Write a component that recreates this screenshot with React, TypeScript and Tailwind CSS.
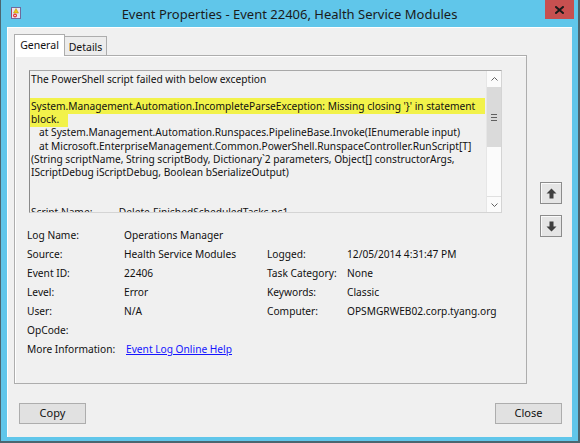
import React from "react";

type Row = [string, string, string?, string?];

const rows: Row[] = [
  ["Log Name:", "Operations Manager"],
  ["Source:", "Health Service Modules", "Logged:", "12/05/2014 4:31:47 PM"],
  ["Event ID:", "22406", "Task Category:", "None"],
  ["Level:", "Error", "Keywords:", "Classic"],
  ["User:", "N/A", "Computer:", "OPSMGRWEB02.corp.tyang.org"],
  ["OpCode:", ""],
];

function AppIcon() {
  return (
    <svg width="12" height="12" viewBox="0 0 12 12">
      <rect x="1.5" y="0.5" width="9" height="11" fill="#e9e4f2" stroke="#6f6a9c" />
      <line x1="1.5" y1="2" x2="1.5" y2="10" stroke="#b04060" strokeWidth="1" />
      <path d="M6 1.5 L8.5 6 L3.5 6 Z" fill="#f2c814" stroke="#b08a00" strokeWidth="0.5" />
      <circle cx="5" cy="8.5" r="2" fill="#e03030" />
      <circle cx="5" cy="8.5" r="0.8" fill="#fff" />
    </svg>
  );
}

function CloseX() {
  return (
    <svg width="9" height="8" viewBox="0 0 9 8">
      <path d="M1 1 L8 7 M8 1 L1 7" stroke="#1a1a1a" strokeWidth="2" strokeLinecap="square" />
    </svg>
  );
}

function BlockArrow({ down }: { down?: boolean }) {
  return (
    <svg width="11" height="11" viewBox="0 0 11 11" className={down ? "rotate-180" : ""}>
      <path d="M5.5 0.5 L10.5 5.5 L7.5 5.5 L7.5 10.5 L3.5 10.5 L3.5 5.5 L0.5 5.5 Z" fill="#3f3f3f" />
    </svg>
  );
}

function Chevron({ down }: { down?: boolean }) {
  return (
    <svg width="7" height="4" viewBox="0 0 7 4" className={down ? "rotate-180" : ""}>
      <path d="M0.5 3.5 L3.5 0.5 L6.5 3.5" fill="none" stroke="#606060" strokeWidth="1" />
    </svg>
  );
}

function TitleBar() {
  return (
    <div className="grid grid-cols-[1fr_auto_1fr] h-[27px] shrink-0">
      <div className="pl-[9px] pt-[7px]">
        <AppIcon />
      </div>
      <div className="pt-[5px] text-[13px] leading-[18px] text-[#1b1b1b]">
        Event Properties - Event 22406, Health Service Modules
      </div>
      <div className="flex justify-end pr-[4px]">
        <div className="w-[29px] h-[19px] bg-[#c75050] flex items-center justify-center">
          <CloseX />
        </div>
      </div>
    </div>
  );
}

function ScrollBar() {
  return (
    <div className="w-[15px] flex flex-col bg-[#fbfbfb] border-l border-[#e6e6e6]">
      <div className="h-[16px] flex items-center justify-center">
        <Chevron />
      </div>
      <div className="h-[60px] bg-[#dadada] flex flex-col items-center justify-center gap-[2px]">
        <div className="w-[6px] h-[1px] bg-[#606060]" />
        <div className="w-[6px] h-[1px] bg-[#606060]" />
        <div className="w-[6px] h-[1px] bg-[#606060]" />
      </div>
      <div className="flex-1" />
      <div className="h-[16px] flex items-center justify-center border-t border-[#e0e0e0]">
        <Chevron down />
      </div>
    </div>
  );
}

function Description() {
  return (
    <div className="h-[143px] w-[473px] ml-[14px] mt-[14px] flex border border-[#d4d4d4] border-l-[#8a8a8a] border-t-[#a8a8a8] bg-[#f0f0f0]">
      <div className="flex-1 overflow-hidden pl-[1px] pt-[2px] text-[10.2px] leading-[13.35px] whitespace-nowrap">
        <div>The PowerShell script failed with below exception</div>
        <div>&nbsp;</div>
        <div>
          <span className="bg-[#f2f24a] -ml-[4px] pl-[4px] pr-[10px] py-[1px]">
            {"System.Management.Automation.IncompleteParseException: Missing closing '}' in statement"}
          </span>
        </div>
        <div>
          <span className="bg-[#f2f24a] -ml-[5px] pl-[5px] pr-[9px] pb-[1px]">block.</span>
        </div>
        <div className="pl-[8px]">at System.Management.Automation.Runspaces.PipelineBase.Invoke(IEnumerable input)</div>
        <div className="pl-[8px]">at Microsoft.EnterpriseManagement.Common.PowerShell.RunspaceController.RunScript[T]</div>
        <div>(String scriptName, String scriptBody, Dictionary`2 parameters, Object[] constructorArgs,</div>
        <div>IScriptDebug iScriptDebug, Boolean bSerializeOutput)</div>
        <div>&nbsp;</div>
        <div>&nbsp;</div>
        <div>Script Name:&nbsp;&nbsp;&nbsp;&nbsp;&nbsp;&nbsp;&nbsp;&nbsp;&nbsp;&nbsp;Delete-FinishedScheduledTasks.ps1</div>
      </div>
      <ScrollBar />
    </div>
  );
}

function Fields() {
  return (
    <div className="ml-[12px] mt-[13px] grid grid-cols-[97px_143px_80px_1fr] text-[10.2px] leading-[19px] whitespace-nowrap">
      {rows.map((r, i) => (
        <React.Fragment key={i}>
          <div>{r[0]}</div>
          <div>{r[1]}</div>
          <div>{r[2] ?? ""}</div>
          <div>{r[3] ?? ""}</div>
        </React.Fragment>
      ))}
      <div>More Information:</div>
      <div className="col-span-3 pl-[2px]">
        <span className="text-[#1515ff] underline">Event Log Online Help</span>
      </div>
    </div>
  );
}

function Tabs() {
  return (
    <div className="w-[513px] flex flex-col">
      <div className="h-[21px] flex items-end">
        <div className="w-[51px] h-[22px] -mb-[1px] relative z-10 bg-[#ffffff] border border-b-0 border-[#adadad] text-[10.5px] leading-[18px] flex justify-center pt-[1px]">
          General
        </div>
        <div className="w-[42px] h-[19px] bg-[#ececec] border border-l-0 border-b-0 border-[#adadad] text-[10.5px] leading-[18px] flex justify-center pt-[1px]">
          Details
        </div>
      </div>
      <div className="h-[329px] border border-[#adadad] bg-[#f0f0f0] shadow-[inset_1px_1px_0_#ffffff]">
        <Description />
        <Fields />
      </div>
    </div>
  );
}

function NavButton({ down }: { down?: boolean }) {
  return (
    <div className="w-[22px] h-[22px] border border-[#8c8c8c] bg-[#e5e5e5] shadow-[inset_1px_1px_0_#fafafa] flex items-center justify-center">
      <BlockArrow down={down} />
    </div>
  );
}

function Button({ label }: { label: string }) {
  return (
    <div className="w-[67px] h-[21px] border border-[#adadad] bg-[#e1e1e1] flex items-center justify-center text-[11px]">
      {label}
    </div>
  );
}

export default function App() {
  return (
    <div className="w-[580px] h-[443px] bg-[#60c6ea] border-l border-r-2 border-b-2 border-[#4b6670] flex flex-col font-['Segoe_UI','Noto_Sans',sans-serif] text-[#111]">
      <TitleBar />
      <div className="ml-[6px] w-[565px] h-[410px] bg-[#f0f0f0] flex flex-col shadow-[inset_1px_1px_0_#ffffff]">
        <div className="flex pl-[7px] pt-[7px]">
          <Tabs />
          <div className="ml-[13px] pt-[148px] flex flex-col gap-[11px]">
            <NavButton />
            <NavButton down />
          </div>
        </div>
        <div className="flex justify-between pl-[12px] pr-[10px] mt-[19px]">
          <Button label="Copy" />
          <Button label="Close" />
        </div>
      </div>
    </div>
  );
}
